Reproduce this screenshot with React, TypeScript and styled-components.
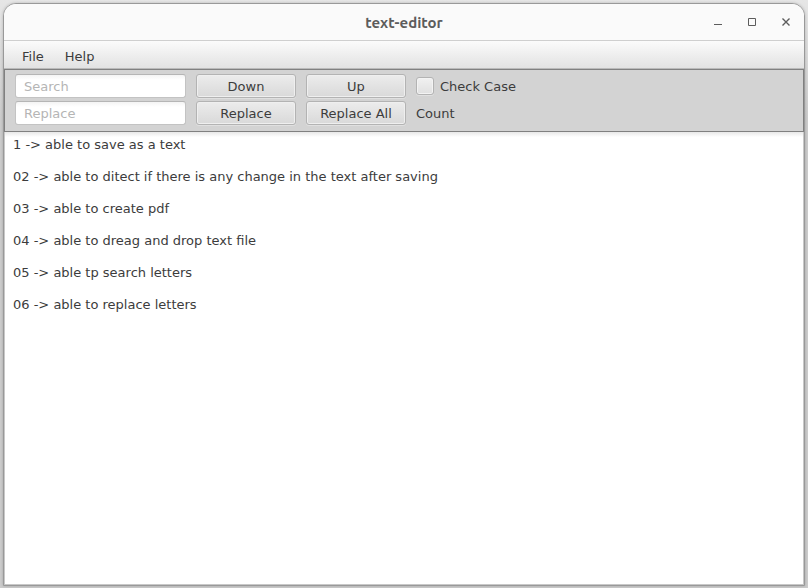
import React, { useState } from "react";
import styled, { createGlobalStyle } from "styled-components";

const GlobalStyle = createGlobalStyle`
  *, *::before, *::after { box-sizing: border-box; }
  body {
    margin: 0;
    background: #d6d6d6;
    color: #3c3c3c;
    font: 13px/16px "DejaVu Sans", Verdana, sans-serif;
  }
  button, input, textarea { font: inherit; color: inherit; }
`;

const Desktop = styled.div`
  display: flex;
  height: 100vh;
  padding: 3px 3px 2px;
  background: linear-gradient(#e6e6e6, #cccccc 20%, #cccccc);
`;

const Window = styled.main`
  flex: 1;
  min-width: 0;
  display: flex;
  flex-direction: column;
  overflow: hidden;
  border: 1px solid #999999;
  border-radius: 13px 13px 0 0;
  background: #ffffff;
  box-shadow: 0 0 3px rgba(0, 0, 0, 0.2);
`;

const TitleBar = styled.header`
  display: grid;
  grid-template-columns: 1fr auto 1fr;
  align-items: center;
  height: 37px;
  background: #fafafa;
  border-bottom: 1px solid #cfcfcf;
`;

const Title = styled.h1`
  grid-column: 2;
  margin: 0;
  padding-top: 2px;
  color: #5c5c5c;
  font: bold 15px/20px Ubuntu, "Noto Sans", sans-serif;
`;

const WindowControls = styled.div`
  justify-self: end;
  display: flex;
  gap: 10px;
  padding-right: 6px;
`;

const WindowButton = styled.button`
  display: grid;
  place-items: center;
  width: 24px;
  height: 24px;
  padding: 0;
  border: 0;
  background: none;
  color: #5c5c5c;
`;

const MenuBar = styled.nav`
  display: flex;
  align-items: center;
  height: 28px;
  padding: 4px 10px 0;
  background: linear-gradient(#fbfbfb, #e2e2e2);
  border-bottom: 1px solid #bababa;
`;

const MenuButton = styled.button`
  padding: 3px 8px;
  border: 0;
  background: none;
  & + & { margin-left: 5px; }
`;

const SearchPanel = styled.form`
  display: grid;
  grid-template-columns: 171px 100px 100px auto;
  grid-auto-rows: 24px;
  justify-content: start;
  align-items: center;
  gap: 3px 10px;
  padding: 4px 10px 6px;
  background: #d3d3d3;
  border: 1px solid #808080;
`;

const Field = styled.input`
  width: 100%;
  height: 24px;
  padding: 0 8px;
  border: 1px solid #c3c3c3;
  border-top-color: #b5b5b5;
  border-radius: 3px;
  background: linear-gradient(#f4f4f4, #ffffff 5px);
  &::placeholder { color: #b5b5b5; opacity: 1; }
`;

const PushButton = styled.button`
  height: 24px;
  padding: 2px 0 0;
  border: 1px solid #b3b3b3;
  border-radius: 3px;
  background: linear-gradient(#ececec, #d9d9d9);
  box-shadow: inset 0 0 0 1px #efefef, 0 1px 0 #e0e0e0;
`;

const CheckLabel = styled.label`
  display: flex;
  align-items: center;
  gap: 6px;
`;

const LabelText = styled.span`
  padding-top: 2px;
`;

const MatchCount = styled.output`
  padding-top: 2px;
`;

const CheckBox = styled.input`
  appearance: none;
  width: 18px;
  height: 18px;
  margin: 0;
  border: 1px solid #b3b3b3;
  border-radius: 3px;
  background: linear-gradient(#f1f1f1, #e0e0e0);
  box-shadow: inset 0 0 0 1px #f3f3f3, 0 1px 0 #e0e0e0;
  &:checked { background: #555555; }
`;

const Editor = styled.textarea`
  flex: 1;
  width: 100%;
  padding: 5px 8px;
  border: 1px solid #c8c8c8;
  border-top: 0;
  outline: none;
  resize: none;
  background: linear-gradient(#e8e8e8, #ffffff 5px);
`;

const INITIAL_TEXT = [
  "1 -> able to save as a text",
  "02 -> able to ditect if there is any change in the text after saving",
  "03 -> able to create pdf",
  "04 -> able to dreag and drop text file",
  "05 -> able tp search letters",
  "06 -> able to replace letters",
].join("\n\n");

const ICON_PATHS = {
  Minimize: "M2 8.5h8",
  Maximize: "M2.5 2.5h7v7h-7z",
  Close: "M2.5 2.5l7 7M9.5 2.5l-7 7",
};

export default function App() {
  const [text, setText] = useState(INITIAL_TEXT);

  return (
    <>
      <GlobalStyle />
      <Desktop>
        <Window>
          <TitleBar>
            <Title>text-editor</Title>
            <WindowControls>
              {Object.entries(ICON_PATHS).map(([name, d]) => (
                <WindowButton key={name} type="button" aria-label={name}>
                  <svg width="12" height="12" viewBox="0 0 12 12" fill="none" stroke="currentColor">
                    <path d={d} strokeWidth={name === "Close" ? 1.4 : 1} />
                  </svg>
                </WindowButton>
              ))}
            </WindowControls>
          </TitleBar>
          <MenuBar>
            <MenuButton type="button">File</MenuButton>
            <MenuButton type="button">Help</MenuButton>
          </MenuBar>
          <SearchPanel onSubmit={(e) => e.preventDefault()}>
            <Field aria-label="Search" placeholder="Search" />
            <PushButton type="button">Down</PushButton>
            <PushButton type="button">Up</PushButton>
            <CheckLabel>
              <CheckBox type="checkbox" />
              <LabelText>Check Case</LabelText>
            </CheckLabel>
            <Field aria-label="Replace" placeholder="Replace" />
            <PushButton type="button">Replace</PushButton>
            <PushButton type="button">Replace All</PushButton>
            <MatchCount>Count</MatchCount>
          </SearchPanel>
          <Editor
            aria-label="Document"
            spellCheck={false}
            value={text}
            onChange={(e) => setText(e.target.value)}
          />
        </Window>
      </Desktop>
    </>
  );
}
